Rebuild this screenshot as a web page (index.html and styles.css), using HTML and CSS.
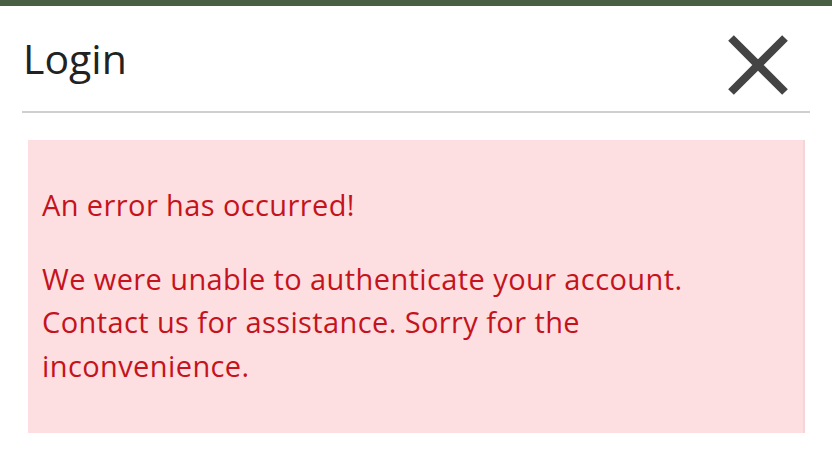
FILE: index.html
```html
<!DOCTYPE html>
<html lang="en">

<head>
    <meta charset="UTF-8" />
    <meta name="viewport" content="width=device-width, initial-scale=1.0" />
    <title>Login</title>
    <link rel="stylesheet" href="styles.css">
</head>

<body>
    <div class="topbar"></div>
    <div class="modal">
        <div class="modal-header">
            <h1>Login</h1>
            <button class="close-btn" aria-label="Close">
                <svg width="64" height="64" viewBox="0 0 64 64">
                    <path d="M5 5 L59 59 M59 5 L5 59" stroke="#444" stroke-width="8" fill="none" />
                </svg>
            </button>
        </div>
        <div class="alert">
            <p>An error has occurred!</p>
            <p>We were unable to authenticate your account. Contact us for assistance. Sorry for the inconvenience.</p>
        </div>
    </div>
</body>

</html>
```

FILE: styles.css
```css
* {
    margin: 0;
    padding: 0;
    box-sizing: border-box;
}

body {
    font-family: "Open Sans", "Lato", sans-serif;
    background: #fff;
    color: #222;
    width: 832px;
    height: 457px;
    overflow: hidden;
}

.topbar {
    height: 6px;
    background: #4a5e45;
}

.modal {
    padding: 0 22px;
}

.modal-header {
    display: flex;
    align-items: flex-start;
    justify-content: space-between;
    height: 107px;
    border-bottom: 2px solid #cfcfcf;
}

.modal-header h1 {
    font-weight: 400;
    font-size: 41px;
    color: #222;
    margin-top: 24px;
    margin-left: 1px;
}

.close-btn {
    background: none;
    border: none;
    width: 64px;
    height: 64px;
    margin-top: 27px;
    margin-right: 20px;
    cursor: pointer;
}

.close-btn svg {
    display: block;
}

.alert {
    margin: 27px 5px 0 6px;
    height: 293px;
    background: #fddfe1;
    border-right: 2px solid #f6d5d7;
    color: #c5131d;
    font-size: 29px;
    letter-spacing: 0.4px;
    line-height: 43.5px;
    padding: 43px 14px 0 14px;
}

.alert p + p {
    margin-top: 30px;
}
```
